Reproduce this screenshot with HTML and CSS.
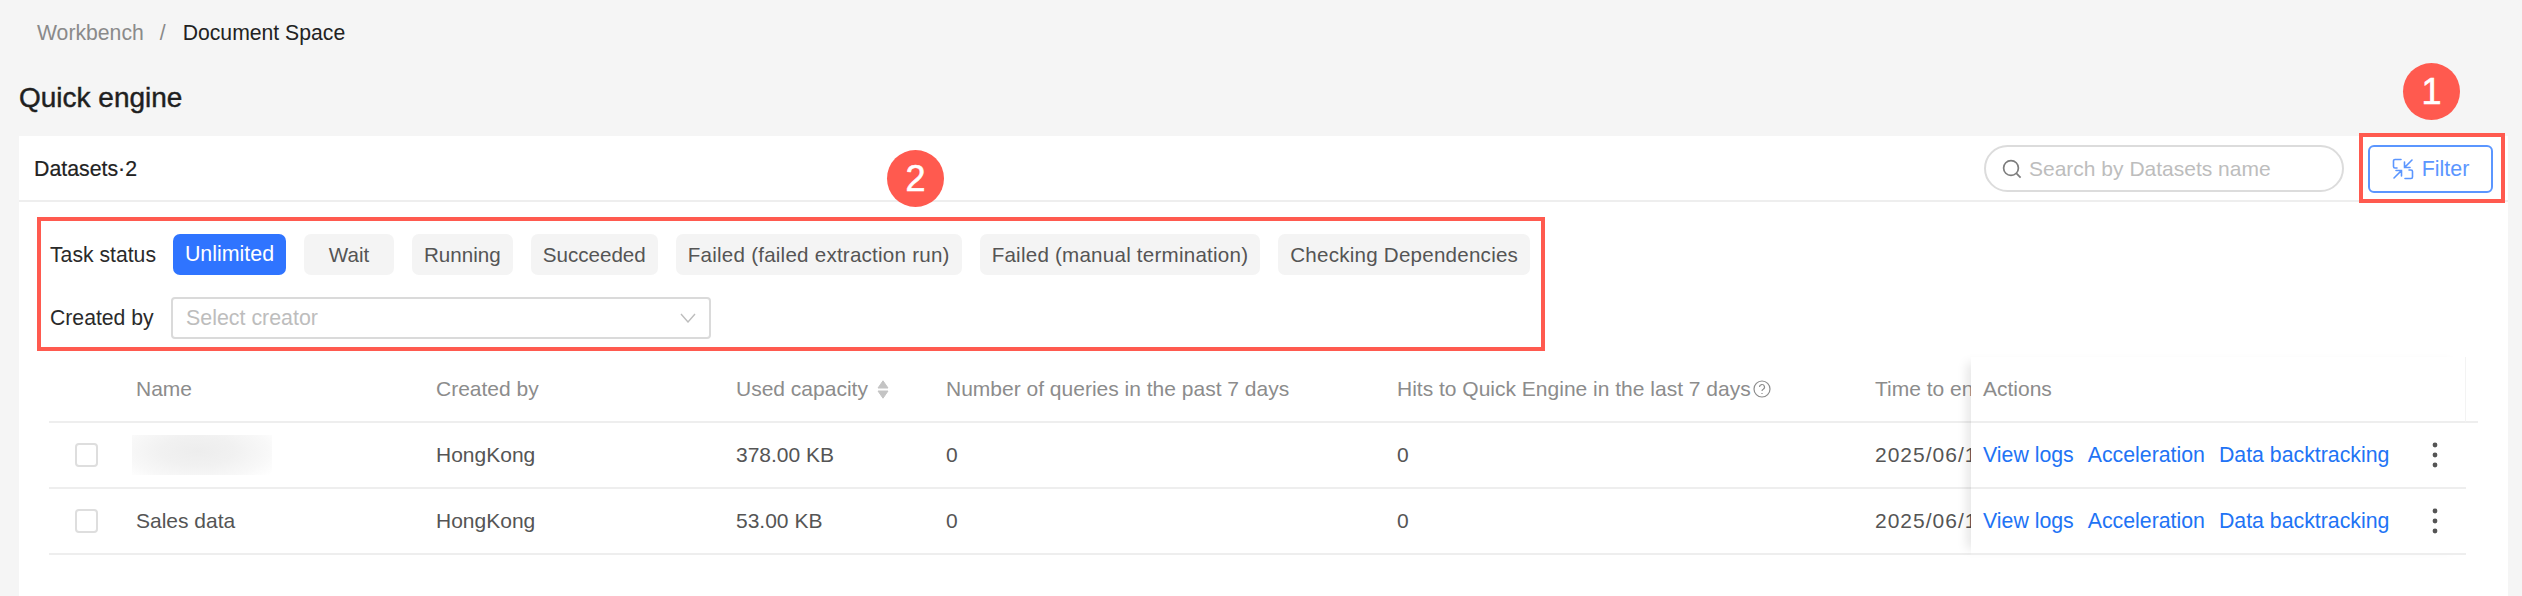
FILE: index.html
```html
<!DOCTYPE html>
<html lang="en">
<head>
<meta charset="utf-8">
<title>Quick engine</title>
<link rel="stylesheet" href="styles.css">
</head>
<body>
<div class="page">
  <nav class="crumbs"><span class="crumb-muted">Workbench</span><span class="crumb-sep">/</span><span class="crumb-current">Document Space</span></nav>
  <h1 class="title">Quick engine</h1>
  <section class="card">
    <header class="card-head">
      <div class="count">Datasets·2</div>
      <div class="search">
        <svg class="search-icon" viewBox="0 0 20 20" width="20" height="20"><circle cx="9" cy="9" r="7.4"/><path d="M14.4 14.4 18.6 18.6"/></svg>
        <span class="search-text">Search by Datasets name</span>
      </div>
      <button class="filter-btn">
        <svg class="filter-icon" viewBox="0 0 22 22" width="22" height="22"><path d="M9 1.500H3a1.500 1.500 0 0 0-1.500 1.500v5.500a1.500 1.500 0 0 0 1.500 1.500H5"/><path d="M13 20.500H19a1.500 1.500 0 0 0 1.500-1.500v-5.500a1.500 1.500 0 0 0-1.500-1.500H17"/><path d="M20 2 12.500 9.500M12.500 4V9.500H18M2 20 9.500 12.500M9.500 18V12.500H4"/></svg>
        <span>Filter</span>
      </button>
    </header>
    <div class="filters">
      <div class="filter-row">
        <span class="filter-label">Task status</span>
        <div class="chips">
          <span class="chip chip-on">Unlimited</span>
          <span class="chip chip-wait">Wait</span>
          <span class="chip">Running</span>
          <span class="chip">Succeeded</span>
          <span class="chip chip-long">Failed (failed extraction run)</span>
          <span class="chip chip-long">Failed (manual termination)</span>
          <span class="chip chip-long">Checking Dependencies</span>
        </div>
      </div>
      <div class="filter-row">
        <span class="filter-label">Created by</span>
        <div class="select">
          <span>Select creator</span>
          <svg viewBox="0 0 16 10" width="16" height="10"><path d="M1 1 8 9 15 1"/></svg>
        </div>
      </div>
    </div>
    <div class="table">
      <div class="table-main">
        <div class="row row-head">
          <span class="c-check"></span>
          <span class="c-name">Name</span>
          <span class="c-owner">Created by</span>
          <span class="c-size">Used capacity
            <svg class="sort" viewBox="0 0 12 19" width="12" height="19"><path d="M6 .8 11 8H1z"/><path d="M6 18.200 1 11H11z"/></svg>
          </span>
          <span class="c-queries">Number of queries in the past 7 days</span>
          <span class="c-hits">Hits to Quick Engine in the last 7 days<svg class="help" viewBox="0 0 18 18" width="18" height="18"><circle cx="9" cy="9" r="8"/><path d="M6.500 7a2.500 2.500 0 1 1 3.700 2.200c-.8.400-1.200.9-1.200 1.800"/><path d="M9 13v1"/></svg></span>
          <span class="c-time">Time to end</span>
        </div>
        <div class="row">
          <span class="c-check"><i class="checkbox"></i></span>
          <span class="c-name"><i class="blurred"></i></span>
          <span class="c-owner">HongKong</span>
          <span class="c-size">378.00 KB</span>
          <span class="c-queries">0</span>
          <span class="c-hits">0</span>
          <span class="c-time c-date">2025/06/18</span>
        </div>
        <div class="row">
          <span class="c-check"><i class="checkbox"></i></span>
          <span class="c-name">Sales data</span>
          <span class="c-owner">HongKong</span>
          <span class="c-size">53.00 KB</span>
          <span class="c-queries">0</span>
          <span class="c-hits">0</span>
          <span class="c-time c-date">2025/06/18</span>
        </div>
      </div>
      <div class="table-fixed">
        <div class="fix-row fix-head">Actions</div>
        <div class="fix-row">
          <a class="act">View logs</a><a class="act">Acceleration</a><a class="act">Data backtracking</a>
          <svg class="kebab" viewBox="0 0 6 26" width="6" height="26"><circle cx="3" cy="3" r="2.400"/><circle cx="3" cy="13" r="2.400"/><circle cx="3" cy="23" r="2.400"/></svg>
        </div>
        <div class="fix-row">
          <a class="act">View logs</a><a class="act">Acceleration</a><a class="act">Data backtracking</a>
          <svg class="kebab" viewBox="0 0 6 26" width="6" height="26"><circle cx="3" cy="3" r="2.400"/><circle cx="3" cy="13" r="2.400"/><circle cx="3" cy="23" r="2.400"/></svg>
        </div>
      </div>
      <div class="table-gutter"></div>
    </div>
  </section>
  <div class="mark mark-filter"></div>
  <div class="mark mark-panel"></div>
  <div class="badge badge-1">1</div>
  <div class="badge badge-2">2</div>
</div>
</body>
</html>
```
FILE: styles.css
```css
* { box-sizing: border-box; }
html, body { margin: 0; height: 100%; }
body {
  background: #f5f5f5;
  font-family: "Liberation Sans", Arial, sans-serif;
  font-size: 21px;
  color: #555;
  overflow: hidden;
}
.page {
  position: relative;
  height: 596px;
  padding: 0 14px 0 19px;
  display: flex;
  flex-direction: column;
}
.crumbs {
  height: 66px;
  padding-left: 18px;
  display: flex;
  align-items: center;
  font-size: 21.200px;
}
.crumb-muted { color: #8a8a8a; }
.crumb-sep { color: #8a8a8a; margin: 0 17px 0 16px; }
.crumb-current { color: #222; }
.title {
  margin: 0;
  height: 70px;
  padding-top: 14px;
  font-size: 28px;
  line-height: 36px;
  font-weight: 400;
  color: #1f1f1f;
  -webkit-text-stroke: 0.45px #1f1f1f;
}
.card {
  flex: 1;
  background: #fff;
  min-width: 0;
}
.card-head {
  height: 66px;
  border-bottom: 2px solid #eeeeee;
  padding: 9px 15px 0 15px;
  display: flex;
  align-items: flex-start;
}
.count {
  flex: 1;
  line-height: 48px;
  color: #222;
  font-size: 21.300px;
  -webkit-text-stroke: 0.2px #222;
}
.search {
  width: 360px;
  height: 47px;
  border: 2px solid #dcdcdc;
  border-radius: 24px;
  display: flex;
  align-items: center;
  padding-left: 16px;
  gap: 7px;
  margin-right: 24px;
  color: #bdbdbd;
}
.search-icon { fill: none; stroke: #7d7d7d; stroke-width: 1.700; flex: none; }
.search-text { font-size: 21px; }
.filter-btn {
  width: 125px;
  height: 48px;
  background: #fff;
  border: 2px solid #5b96ff;
  border-radius: 6px;
  color: #5b96ff;
  font: inherit;
  font-size: 21.400px;
  display: flex;
  align-items: center;
  justify-content: center;
  gap: 8px;
  padding: 0;
}
.filter-icon { fill: none; stroke: #5b96ff; stroke-width: 1.600; stroke-linecap: round; flex: none; }
.filters {
  margin: 16px 0 0 31px;
  padding-top: 16px;
  height: 134px;
  display: flex;
  flex-direction: column;
  gap: 22px;
}
.filter-row {
  display: flex;
  align-items: center;
  gap: 18px;
}
.filter-label {
  width: 105px;
  color: #2a2a2a;
  flex: none;
  font-size: 21.200px;
  white-space: nowrap;
}
.chips { display: flex; gap: 18px; }
.chip {
  height: 41px;
  line-height: 41px;
  padding: 0 12px;
  background: #f4f4f4;
  border-radius: 7px;
  color: #555;
  white-space: nowrap;
  font-size: 20.600px;
}
.chip-long { letter-spacing: .22px; }
.chip-on { background: #2f74ff; color: #fff; width: 113px; padding: 0; text-align: center; font-size: 21.400px; }
.chip-wait { width: 90px; padding: 0; text-align: center; }
.select {
  margin-left: -2px;
  width: 540px;
  height: 42px;
  border: 2px solid #dadada;
  border-radius: 4px;
  display: flex;
  align-items: center;
  justify-content: space-between;
  padding: 0 13px;
  color: #bdbdbd;
  font-size: 21.400px;
}
.select svg { fill: none; stroke: #bdbdbd; stroke-width: 1.400; }
.table {
  display: flex;
  margin: 5px 30px 0 30px;
}
.table-main {
  flex: none;
  width: 1922px;
  overflow: hidden;
}
.row {
  display: flex;
  align-items: center;
  height: 66px;
  border-bottom: 2px solid #eeeeee;
  white-space: nowrap;
}
.row-head { height: 66px; color: #8c8c8c; }
.c-check { width: 87px; flex: none; padding-left: 26px; display: flex; }
.c-name { width: 300px; flex: none; position: relative; }
.c-owner { width: 300px; flex: none; }
.c-size { width: 210px; flex: none; display: flex; align-items: center; gap: 9px; }
.c-queries { width: 451px; flex: none; }
.c-hits { width: 478px; flex: none; display: flex; align-items: center; gap: 1px; }
.c-time { flex: none; }
.c-date { letter-spacing: 1px; }
.checkbox {
  display: block;
  width: 23px;
  height: 24px;
  border: 2px solid #dedede;
  border-radius: 4px;
}
.blurred {
  display: block;
  width: 140px;
  height: 40px;
  margin-left: -4px;
  background: radial-gradient(ellipse 66% 95% at 47% 40%, #ededed 0%, #f1f1f1 40%, #f8f8f8 75%, #fff 100%);
}
.sort { fill: #c4c4c4; stroke: #c4c4c4; stroke-width: 1; stroke-linejoin: round; flex: none; }
.help { fill: none; stroke: #8c8c8c; stroke-width: 1.200; flex: none; margin-left: 1px; }
.table-fixed {
  flex: none;
  width: 495px;
  box-shadow: -10px 0 10px -6px rgba(0,0,0,.1);
  background: #fff;
  position: relative;
}
.fix-row {
  height: 66px;
  display: flex;
  align-items: center;
  padding-left: 12px;
  border-bottom: 2px solid #eeeeee;
  white-space: nowrap;
}
.fix-head { color: #8c8c8c; border-right: 1px solid #f3f3f3; }
.act { color: #2173f5; margin-right: 14px; font-size: 21.300px; }
.kebab { fill: #555; margin-left: 29px; flex: none; }
.table-gutter {
  width: 12px;
  height: 66px;
  border-bottom: 2px solid #eeeeee;
}
.mark {
  position: absolute;
  border: 4px solid #ff5a4f;
  pointer-events: none;
}
.mark-filter { left: 2359px; top: 133px; width: 146px; height: 70px; }
.mark-panel { left: 37px; top: 217px; width: 1508px; height: 134px; }
.badge {
  position: absolute;
  width: 57px;
  height: 57px;
  border-radius: 50%;
  background: #ff5a4f;
  color: #fff;
  text-align: center;
  line-height: 57px;
  font-size: 36px;
  -webkit-text-stroke: 0.6px #fff;
}
.badge-1 { left: 2403px; top: 63px; }
.badge-2 { left: 887px; top: 150px; }
```
